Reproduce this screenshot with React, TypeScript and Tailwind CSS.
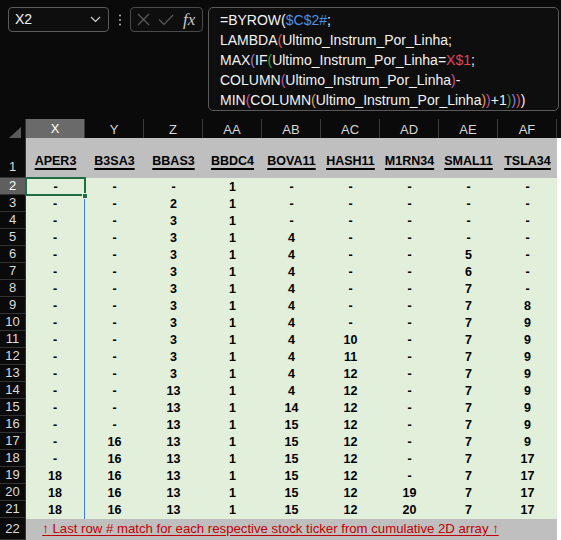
import React from "react";

const cols = ["X", "Y", "Z", "AA", "AB", "AC", "AD", "AE", "AF"];
const tickers = ["APER3", "B3SA3", "BBAS3", "BBDC4", "BOVA11", "HASH11", "M1RN34", "SMAL11", "TSLA34"];
const data: string[][] = [
  ["-", "-", "-", "1", "-", "-", "-", "-", "-"],
  ["-", "-", "2", "1", "-", "-", "-", "-", "-"],
  ["-", "-", "3", "1", "-", "-", "-", "-", "-"],
  ["-", "-", "3", "1", "4", "-", "-", "-", "-"],
  ["-", "-", "3", "1", "4", "-", "-", "5", "-"],
  ["-", "-", "3", "1", "4", "-", "-", "6", "-"],
  ["-", "-", "3", "1", "4", "-", "-", "7", "-"],
  ["-", "-", "3", "1", "4", "-", "-", "7", "8"],
  ["-", "-", "3", "1", "4", "-", "-", "7", "9"],
  ["-", "-", "3", "1", "4", "10", "-", "7", "9"],
  ["-", "-", "3", "1", "4", "11", "-", "7", "9"],
  ["-", "-", "3", "1", "4", "12", "-", "7", "9"],
  ["-", "-", "13", "1", "4", "12", "-", "7", "9"],
  ["-", "-", "13", "1", "14", "12", "-", "7", "9"],
  ["-", "-", "13", "1", "15", "12", "-", "7", "9"],
  ["-", "16", "13", "1", "15", "12", "-", "7", "9"],
  ["-", "16", "13", "1", "15", "12", "-", "7", "17"],
  ["18", "16", "13", "1", "15", "12", "-", "7", "17"],
  ["18", "16", "13", "1", "15", "12", "19", "7", "17"],
  ["18", "16", "13", "1", "15", "12", "20", "7", "17"],
];

const W = "#f2f2f2";
const RED = "#e8505b";
const PUR = "#8f7df0";
const GRN = "#2ea043";
const MAG = "#c94fb0";
const ORG = "#e8a03a";
const BLU = "#4d8fe6";

const formula: [string, string][][] = [
  [["=BYROW(", W], ["$C$2#", BLU], [";", W]],
  [["LAMBDA", W], ["(", RED], ["Ultimo_Instrum_Por_Linha;", W]],
  [["MAX", W], ["(", PUR], ["IF", W], ["(", GRN], ["Ultimo_Instrum_Por_Linha=", W], ["X$1", "#e0484f"], [";", W]],
  [["COLUMN", W], ["(", MAG], ["Ultimo_Instrum_Por_Linha", W], [")", MAG], ["-", W]],
  [
    ["MIN", W], ["(", MAG], ["COLUMN", W], ["(", ORG], ["Ultimo_Instrum_Por_Linha", W], [")", ORG], [")", MAG],
    ["+1", W], [")", GRN], [")", PUR], [")", RED], [")", W],
  ],
];

const gridCols = "grid grid-cols-[26px_repeat(9,59px)_1fr]";

function RowHead({ n, sel, tall, h }: { n: number; sel?: boolean; tall?: boolean; h: string }) {
  return (
    <div
      className={`${h} flex justify-center ${tall ? "items-end pb-[2px]" : "items-center"} border-b border-r border-[#333333] text-[13px] leading-[16px] ${
        sel ? "bg-[#5f5f5f] text-white" : "bg-[#0a0a0a] text-[#dcdcdc]"
      }`}
    >
      {n}
    </div>
  );
}

export default function App() {
  return (
    <div className="w-[561px] h-[540px] bg-[#0a0a0a] overflow-hidden font-['Liberation_Sans',Arial,sans-serif]">
      {/* formula bar */}
      <div className="h-[119px] flex items-start pt-[7px] pl-[8px]">
        <div className="w-[101px] h-[25px] rounded-[4px] border border-[#5a5a5a] bg-[#0e0e0e] flex items-center justify-between pl-[6px] pr-[7px]">
          <span className="text-[14px] text-[#f2f2f2]">X2</span>
          <svg width="11" height="7" viewBox="0 0 11 7">
            <path d="M1 1 L5.5 5.5 L10 1" fill="none" stroke="#cfcfcf" strokeWidth="1.2" />
          </svg>
        </div>
        <div className="w-[21px] h-[25px] flex items-center justify-center">
          <svg width="4" height="12" viewBox="0 0 4 12">
            <circle cx="2" cy="1.5" r="1.1" fill="#a8a8a8" />
            <circle cx="2" cy="6" r="1.1" fill="#a8a8a8" />
            <circle cx="2" cy="10.5" r="1.1" fill="#a8a8a8" />
          </svg>
        </div>
        <div className="w-[73px] h-[25px] rounded-[4px] border border-[#4a4a4a] bg-[#0e0e0e] flex items-center pl-[6px] gap-[8px]">
          <svg width="13" height="13" viewBox="0 0 13 13">
            <path d="M1 1 L12 12 M12 1 L1 12" stroke="#5c5c5c" strokeWidth="1.2" fill="none" />
          </svg>
          <svg width="16" height="12" viewBox="0 0 16 12">
            <path d="M1 5.5 L6 10.5 L15 1" stroke="#5c5c5c" strokeWidth="1.2" fill="none" />
          </svg>
          <span className="font-['Liberation_Serif',serif] italic text-[17px] leading-[20px] text-[#c8c8c8] ml-[1px]">fx</span>
        </div>
        <div className="ml-[5px] w-[351px] h-[104px] rounded-[5px] border border-[#5a5a5a] bg-[#0e0e0e] pt-[2px] pl-[11px] text-[14px] leading-[20px] whitespace-nowrap">
          {formula.map((line, i) => (
            <div key={i}>
              {line.map(([t, c], j) => (
                <span key={j} style={{ color: c }}>
                  {t}
                </span>
              ))}
            </div>
          ))}
        </div>
      </div>

      {/* column headers */}
      <div className={`${gridCols} h-[19px]`}>
        <div className="flex items-end justify-end pr-[4px] pb-[3px] border-r border-[#333333]">
          <svg width="12" height="11" viewBox="0 0 12 11">
            <polygon points="12,0 12,11 0,11" fill="#5a5a5a" />
          </svg>
        </div>
        {cols.map((c, i) => (
          <div
            key={c}
            className={`flex items-center justify-center text-[13px] border-r border-[#3a3a3a] ${
              i === 0 ? "bg-[#6a6a6a] text-white border-b-2 border-b-[#1f7a47]" : "text-[#d8d8d8]"
            }`}
          >
            {c}
          </div>
        ))}
        <div />
      </div>

      {/* row 1 */}
      <div className={`${gridCols} h-[40px]`}>
        <RowHead n={1} tall h="h-[40px]" />
        {tickers.map((t) => (
          <div key={t} className="bg-[#bfbfbf] flex items-end justify-center pb-[9px]">
            <span className="font-bold text-[12.5px] leading-[15px] text-black underline underline-offset-[3px] decoration-[1.5px]">
              {t}
            </span>
          </div>
        ))}
        <div className="bg-white" />
      </div>

      {/* data rows */}
      <div className="relative">
        {data.map((row, r) => (
          <div key={r} className={`${gridCols} h-[17px]`}>
            <RowHead n={r + 2} sel={r === 0} h="h-[17px]" />
            {row.map((v, c) => (
              <div
                key={c}
                className={`bg-[#e2efda] flex items-center justify-center font-bold text-[12.5px] leading-[17px] text-black pt-[1px] ${
                  c === 0 && r > 0 ? "border-r border-[#3f7be0]" : ""
                }`}
              >
                {v}
              </div>
            ))}
            <div className="bg-white" />
          </div>
        ))}
        {/* active cell selection X2 */}
        <div className="absolute left-[25px] top-[-1px] w-[61px] h-[19px] border-2 border-[#1f6e43] z-10" />
        <div className="absolute left-[82px] top-[15px] w-[6px] h-[6px] bg-[#1f6e43] border border-[#e2efda] z-20" />
      </div>

      {/* row 22 */}
      <div className={`${gridCols} h-[22px]`}>
        <RowHead n={22} h="h-[22px]" />
        <div className="col-span-9 bg-[#bfbfbf] flex items-center justify-center pb-[1px] pr-[42px]">
          <span className="text-[13.2px] leading-[16px] text-[#c00000] underline underline-offset-[2px] whitespace-nowrap">
            ↑ Last row # match for each respective stock ticker from cumulative 2D array ↑
          </span>
        </div>
        <div className="bg-white" />
      </div>
    </div>
  );
}
